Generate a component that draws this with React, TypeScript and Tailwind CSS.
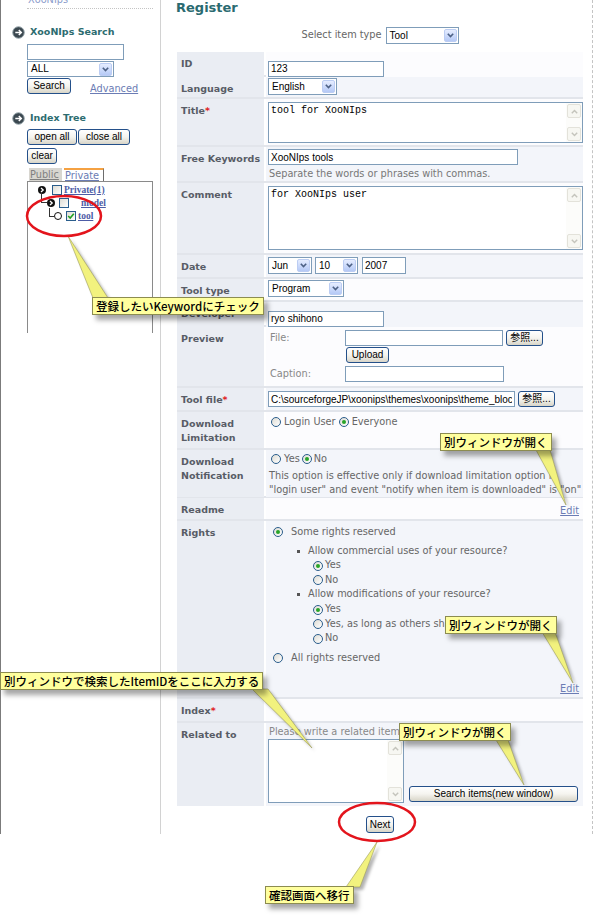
import React from "react";

const arial = "font-['Liberation_Sans','Noto_Sans_CJK_JP',Arial,sans-serif]";
const verdana = "font-['DejaVu_Sans',Verdana,sans-serif]";
const serifLink = "font-['Liberation_Serif',serif] font-bold text-[9.5px] text-[#4c5ca6] underline leading-[10px]";
const link = "text-[9.75px] leading-[12px] text-[#6b7cb4] underline";

function Chevron({ color = "#4d6185" }: { color?: string }) {
  return (
    <svg width="7" height="5" viewBox="0 0 7 5">
      <path d="M0.8 0.8 L3.5 3.6 L6.2 0.8" fill="none" stroke={color} strokeWidth="1.6" />
    </svg>
  );
}

function XpSelect({ text, className }: { text: string; className: string }) {
  return (
    <div className={`${className} border border-[#7f9db9] bg-white flex items-center justify-between pl-[3px] pr-px`}>
      <span className={`${arial} text-[10px] leading-none text-black`}>{text}</span>
      <span className="w-[13px] h-[13px] rounded-[2px] border border-[#bccdf3] bg-gradient-to-b from-[#e6edff] to-[#b5c9f6] flex items-center justify-center">
        <Chevron />
      </span>
    </div>
  );
}

function XpInput({ value = "", className }: { value?: string; className: string }) {
  return (
    <input
      readOnly
      value={value}
      className={`${className} h-[16px] border border-[#7f9db9] bg-white px-[2px] ${arial} text-[10px] text-black outline-none`}
    />
  );
}

function XpButton({ children, className }: { children: React.ReactNode; className: string }) {
  return (
    <button
      type="button"
      className={`${className} h-[16px] border border-[#24508a] rounded-[3px] bg-gradient-to-b from-white via-[#f5f4ef] to-[#d8d5c8] ${arial} text-[10px] leading-none text-black flex items-center justify-center shrink-0`}
    >
      {children}
    </button>
  );
}

function ScrollArrow({ up }: { up?: boolean }) {
  return (
    <span className="w-[14px] h-[14px] border border-[#e3e2da] rounded-[2px] bg-[#f7f7f2] flex items-center justify-center">
      <svg width="7" height="5" viewBox="0 0 7 5" className={up ? "rotate-180" : ""}>
        <path d="M0.8 0.8 L3.5 3.6 L6.2 0.8" fill="none" stroke="#c4c4bc" strokeWidth="1.4" />
      </svg>
    </span>
  );
}

function XpTextArea({ text = "", className }: { text?: string; className: string }) {
  return (
    <div className={`${className} border border-[#7f9db9] bg-white flex shrink-0`}>
      <div className="flex-1 pl-[2px] pt-[2px] font-['Liberation_Mono',monospace] text-[10px] leading-[12px] text-black whitespace-pre">
        {text}
      </div>
      <div className="w-[16px] bg-[#fcfcfa] flex flex-col justify-between p-px">
        <ScrollArrow up />
        <ScrollArrow />
      </div>
    </div>
  );
}

function Radio({ checked }: { checked?: boolean }) {
  return (
    <span className="w-[10px] h-[10px] rounded-full border border-[#2a5d8c] bg-gradient-to-br from-[#dedcd4] to-white flex items-center justify-center shrink-0">
      {checked && <span className="w-[4px] h-[4px] rounded-full bg-[#28a428]" />}
    </span>
  );
}

function Check({ checked }: { checked?: boolean }) {
  return (
    <span className="w-[10px] h-[10px] border border-[#2a5d8c] bg-gradient-to-br from-[#dedcd4] to-white flex items-center justify-center shrink-0">
      {checked && (
        <svg width="8" height="8" viewBox="0 0 8 8">
          <path d="M1.2 4 L3.2 6 L6.8 1.8" fill="none" stroke="#21a121" strokeWidth="1.6" />
        </svg>
      )}
    </span>
  );
}

function Expand() {
  return (
    <svg width="8" height="8" viewBox="0 0 8 8" className="shrink-0">
      <circle cx="4" cy="4" r="4" fill="#111" />
      <path d="M3 2 L5.2 4 L3 6" fill="none" stroke="#fff" strokeWidth="1.3" />
    </svg>
  );
}

function BlockIcon() {
  return (
    <svg width="13" height="13" viewBox="0 0 13 13" className="shrink-0">
      <circle cx="6.5" cy="6.5" r="5.8" fill="#3b4850" stroke="#9aa8ae" strokeWidth="1" />
      <path d="M3.3 6.5 H9.2 M6.8 4 L9.3 6.5 L6.8 9" fill="none" stroke="#fff" strokeWidth="1.5" />
    </svg>
  );
}

function Row({
  label,
  req,
  h,
  alt,
  cell = "",
  children,
}: {
  label: React.ReactNode;
  req?: boolean;
  h: string;
  alt?: boolean;
  cell?: string;
  children?: React.ReactNode;
}) {
  return (
    <div className={`grid grid-cols-[87px_317px] gap-x-[2px] bg-white ${h}`}>
      <div className="bg-[#eaedf3] pl-[4px] pt-[5px] text-[9.5px] leading-[14px] font-bold text-[#585c66]">
        {label}
        {req && <span className="text-[#e0201c]">*</span>}
      </div>
      <div className={`${alt ? "bg-[#f3f5fa]" : "bg-[#fcfcfe]"} ${cell}`}>{children}</div>
    </div>
  );
}

function Callout({ text, className }: { text: string; className: string }) {
  return (
    <div
      className={`absolute ${className} h-[18px] px-[3px] bg-[#ffff9e] border border-[#8c8c50] shadow-[4px_5px_5px_rgba(0,0,0,0.35)] font-['Noto_Sans_CJK_JP',sans-serif] text-[11.5px] leading-[16px] font-medium text-black whitespace-nowrap`}
    >
      {text}
    </div>
  );
}

const tails = [
  "93,298 108,298 68,236",
  "536,450 550,450 566,505",
  "542,632 555,632 573,683",
  "252,689 268,689 312,748",
  "496,740 508,740 524,785",
  "346,887 360,887 377,842",
];

export default function App() {
  return (
    <div className={`relative w-[600px] h-[923px] bg-white overflow-hidden ${verdana}`}>
      <div className="flex h-[834px]">
        {/* Sidebar */}
        <aside className="w-[161px] shrink-0 border-l border-r border-l-[#7b7b7b] border-r-[#d2d2d2]">
          <div className="ml-[26px] mr-[7px] h-[9px] border-b border-dotted border-[#c4c4c4] overflow-hidden">
            <div className="-mt-[6px] pl-[1px] text-[9.75px] leading-[12px] text-[#8c9ccb]">XooNIps</div>
          </div>

          <div className="mt-[17px] h-[13px] pl-[11px] flex items-center gap-[5px]">
            <BlockIcon />
            <span className="text-[9.5px] font-bold text-[#2d6c70]">XooNIps Search</span>
          </div>
          <XpInput className="mt-[5px] ml-[26px] w-[97px] block" />
          <XpSelect className="mt-px ml-[26px] w-[87px] h-[16px]" text="ALL" />
          <div className="mt-px ml-[26px] flex items-end">
            <XpButton className="w-[44px]">Search</XpButton>
            <a className={`ml-[19px] ${link} translate-y-[1px]`}>Advanced</a>
          </div>

          <div className="mt-[18px] h-[13px] pl-[11px] flex items-center gap-[5px]">
            <BlockIcon />
            <span className="text-[9.5px] font-bold text-[#2d6c70]">Index Tree</span>
          </div>
          <div className="mt-[4px] ml-[26px] flex gap-px">
            <XpButton className="w-[50px]">open all</XpButton>
            <XpButton className="w-[52px]">close all</XpButton>
          </div>
          <XpButton className="mt-[3px] ml-[26px] w-[30px]">clear</XpButton>

          <div className="mt-[4px] ml-[28px] flex h-[13px]">
            <span className="h-[13px] w-[33px] bg-[#d8d6d0] text-[9.75px] leading-[13px] text-[#808080] underline pl-[1px]">
              Public
            </span>
            <span className="ml-[2px] h-[13px] w-[40px] border-t-2 border-t-[#f5a142] border-r border-r-[#6d6d6d] bg-white text-[9.75px] leading-[11px] text-[#6b7cb4] underline pl-[1px]">
              Private
            </span>
          </div>
          <div className="ml-[26px] w-[126px] h-[152px] border-l border-r border-t border-[#8a8a8a] pt-[3px]">
            <div className="h-[10px] flex items-center pl-[10px]">
              <Expand />
              <span className="ml-[6px]">
                <Check />
              </span>
              <span className={`ml-[2px] ${serifLink}`}>Private(1)</span>
            </div>
            <div className="mt-[3px] h-[10px] flex items-center">
              <span className="ml-[13px] w-[6px] h-[10px] -mt-[10px] border-l border-b border-[#333] shrink-0" />
              <Expand />
              <span className="ml-[4px]">
                <Check />
              </span>
              <span className={`ml-[12px] ${serifLink}`}>model</span>
            </div>
            <div className="mt-[3px] h-[10px] flex items-center">
              <span className="ml-[21px] w-[5px] h-[9px] -mt-[8px] border-l border-b border-[#333] shrink-0" />
              <span className="w-[8px] h-[8px] rounded-full border-[1.5px] border-[#111] shrink-0" />
              <span className="ml-[4px]">
                <Check checked />
              </span>
              <span className={`ml-[2px] ${serifLink}`}>tool</span>
            </div>
          </div>
        </aside>

        {/* Main */}
        <main className="w-[432px] shrink-0 border-r border-dashed border-[#c4c4c4] pl-[15px]">
          <h1 className="h-[16px] text-[13px] leading-[16px] font-bold text-[#2a6a70]">Register</h1>

          <div className="mt-[11px] ml-[1px] w-[406px] h-[17px] flex items-center justify-center gap-[4px]">
            <span className="text-[9.75px] text-[#666]">Select item type</span>
            <XpSelect className="w-[73px] h-[17px]" text="Tool" />
          </div>

          <div className="mt-[8px] ml-[1px] w-[406px] bg-[#e2e5eb] flex flex-col gap-[2px]">
            <Row label="ID" h="h-[23px]" cell="pl-[2px] pt-[3px]">
              <XpInput className="w-[116px]" value="123" />
            </Row>
            <Row label="Language" h="h-[20px]" alt cell="pl-[2px] pt-px">
              <XpSelect className="w-[69px] h-[17px]" text="English" />
            </Row>
            <Row label="Title" req h="h-[46px]" cell="pl-[2px] pt-[3px]">
              <XpTextArea className="w-[315px] h-[41px]" text="tool for XooNIps" />
            </Row>
            <Row label="Free Keywords" h="h-[34px]" alt cell="pl-[2px] pt-[2px]">
              <XpInput className="w-[250px] block" value="XooNIps tools" />
              <div className="mt-[3px] pl-px text-[9.75px] leading-[12px] text-[#777]">
                Separate the words or phrases with commas.
              </div>
            </Row>
            <Row label="Comment" h="h-[70px]" cell="pl-[2px] pt-[3px]">
              <XpTextArea className="w-[315px] h-[64px]" text="for XooNIps user" />
            </Row>
            <Row label="Date" h="h-[22px]" alt cell="pl-[2px] pt-[2px] flex items-start">
              <XpSelect className="w-[44px] h-[17px]" text="Jun" />
              <XpSelect className="ml-[3px] w-[43px] h-[17px]" text="10" />
              <XpInput className="ml-[4px] w-[44px] !h-[17px]" value="2007" />
            </Row>
            <Row label="Tool type" h="h-[21px]" cell="pl-[2px] pt-px">
              <XpSelect className="w-[76px] h-[17px]" text="Program" />
            </Row>
            <Row label="Developer" h="h-[23px]" alt cell="pl-[2px] pt-[3px]">
              <XpInput className="w-[116px]" value="ryo shihono" />
            </Row>
            <Row label="Preview" h="h-[59px]" cell="pl-[4px] pt-[3px] text-[9.75px] text-[#888]">
              <div className="h-[16px] flex items-center">
                <span className="w-[75px]">File:</span>
                <XpInput className="w-[158px]" />
                <XpButton className="ml-[3px] w-[37px]">参照...</XpButton>
              </div>
              <div className="mt-px pl-[76px]">
                <XpButton className="w-[43px]">Upload</XpButton>
              </div>
              <div className="mt-[3px] h-[16px] flex items-center">
                <span className="w-[75px]">Caption:</span>
                <XpInput className="w-[159px]" />
              </div>
            </Row>
            <Row label="Tool file" req h="h-[22px]" alt cell="pl-[2px] pt-[3px] flex">
              <XpInput className="w-[247px]" value="C:\sourceforgeJP\xoonips\themes\xoonips\theme_blockc" />
              <XpButton className="ml-[3px] w-[37px]">参照...</XpButton>
            </Row>
            <Row label={<>Download<br />Limitation</>} h="h-[36px]" cell="pl-[5px] pt-[3px] text-[9.75px] text-[#666]">
              <div className="h-[14px] flex items-center">
                <Radio />
                <span className="ml-[3px]">Login User</span>
                <span className="ml-[3px]">
                  <Radio checked />
                </span>
                <span className="ml-[3px]">Everyone</span>
              </div>
            </Row>
            <Row label={<>Download<br />Notification</>} h="h-[46px]" alt cell="pt-[2px] text-[9.75px] text-[#666]">
              <div className="pl-[5px] h-[14px] flex items-center">
                <Radio />
                <span className="ml-[3px]">Yes</span>
                <span className="ml-[2px]">
                  <Radio checked />
                </span>
                <span className="ml-[2px]">No</span>
              </div>
              <div className="mt-[3px] pl-[3px] leading-[14px] whitespace-nowrap">
                This option is effective only if download limitation option is
                <br />
                "login user" and event "notify when item is downloaded" is "on"
              </div>
            </Row>
            <Row label="Readme" h="h-[21px]" cell="flex items-end justify-end pr-[4px] pb-[2px]">
              <a className={link}>Edit</a>
            </Row>
            <Row label="Rights" h="h-[176px]" alt cell="pl-[7px] pt-[4px] pr-[4px] pb-[2px] flex flex-col text-[9.75px] text-[#666]">
              <div className="h-[14px] flex items-center">
                <Radio checked />
                <span className="ml-[8px]">Some rights reserved</span>
              </div>
              <div className="mt-[5px] h-[14px] flex items-center pl-[24px]">
                <span className="w-[3px] h-[3px] bg-[#555]" />
                <span className="ml-[8px]">Allow commercial uses of your resource?</span>
              </div>
              <div className="h-[15px] flex items-center pl-[40px]">
                <Radio checked />
                <span className="ml-[2px]">Yes</span>
              </div>
              <div className="h-[14px] flex items-center pl-[40px]">
                <Radio />
                <span className="ml-[2px]">No</span>
              </div>
              <div className="h-[15px] flex items-center pl-[24px]">
                <span className="w-[3px] h-[3px] bg-[#555]" />
                <span className="ml-[8px]">Allow modifications of your resource?</span>
              </div>
              <div className="h-[15px] flex items-center pl-[40px]">
                <Radio checked />
                <span className="ml-[2px]">Yes</span>
              </div>
              <div className="h-[14px] flex items-center pl-[40px]">
                <Radio />
                <span className="ml-[2px]">Yes, as long as others share alike</span>
              </div>
              <div className="h-[15px] flex items-center pl-[40px]">
                <Radio />
                <span className="ml-[2px]">No</span>
              </div>
              <div className="mt-[5px] h-[14px] flex items-center">
                <Radio />
                <span className="ml-[8px]">All rights reserved</span>
              </div>
              <a className={`mt-auto self-end ${link}`}>Edit</a>
            </Row>
            <Row label="Index" req h="h-[22px]" />
            <Row label="Related to" h="h-[83px]" alt cell="pl-[2px] pt-[3px]">
              <div className="pl-px text-[9.75px] leading-[12px] text-[#888]">Please write a related item ID</div>
              <div className="mt-px flex items-end">
                <XpTextArea className="w-[136px] h-[64px]" />
                <XpButton className="ml-[5px] mb-px w-[169px]">Search items(new window)</XpButton>
              </div>
            </Row>
          </div>

          <div className="mt-[10px] ml-[1px] w-[406px] flex justify-center">
            <XpButton className="w-[28px] !h-[17px]">Next</XpButton>
          </div>
        </main>
      </div>

      {/* Annotation overlay */}
      <svg className="absolute left-0 top-0 pointer-events-none" width="600" height="923">
        <defs>
          <filter id="soft">
            <feGaussianBlur stdDeviation="1.5" />
          </filter>
        </defs>
        {tails.map((t) => (
          <polygon key={"s" + t} points={t} fill="rgba(0,0,0,0.3)" filter="url(#soft)" transform="translate(3,3)" />
        ))}
        {tails.map((t) => (
          <polygon key={t} points={t} fill="#f2f27e" stroke="#9c9c5c" strokeWidth="0.6" />
        ))}
        <ellipse cx="64" cy="216" rx="37" ry="20" fill="none" stroke="#e3141c" strokeWidth="2.5" />
        <ellipse cx="377" cy="822" rx="38" ry="19" fill="none" stroke="#e3141c" strokeWidth="2.5" />
      </svg>

      <Callout className="left-[92px] top-[297px]" text="登録したいKeywordにチェック" />
      <Callout className="left-[440px] top-[433px]" text="別ウィンドウが開く" />
      <Callout className="left-[445px] top-[616px]" text="別ウィンドウが開く" />
      <Callout className="left-[0px] top-[672px]" text="別ウィンドウで検索したItemIDをここに入力する" />
      <Callout className="left-[399px] top-[723px]" text="別ウィンドウが開く" />
      <Callout className="left-[265px] top-[886px]" text="確認画面へ移行" />
    </div>
  );
}
